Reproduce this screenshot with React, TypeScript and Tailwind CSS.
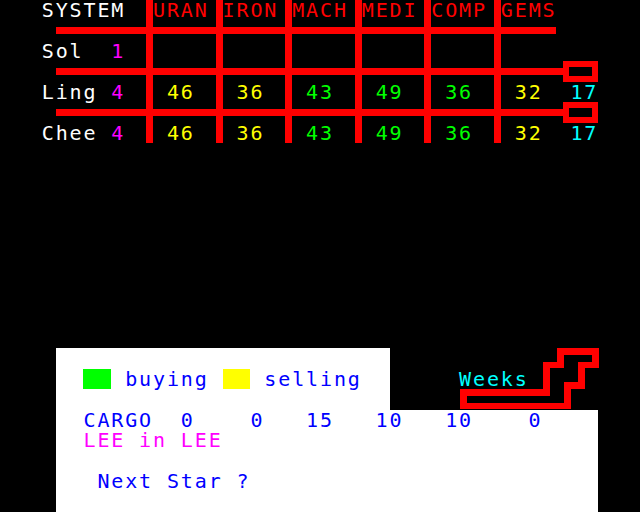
// Teletext (mode 7) trading screen: 46 x 25 cells of 13.913 x 20.48 px
const priceCells = [
  { col: "col-[5]", color: "text-[#ffff00]" },
  { col: "col-[7]", color: "text-[#ffff00]" },
  { col: "col-[9]", color: "text-[#00ff00]" },
  { col: "col-[11]", color: "text-[#00ff00]" },
  { col: "col-[13]", color: "text-[#00ff00]" },
  { col: "col-[15]", color: "text-[#ffff00]" },
];
const prices = ["46", "36", "43", "49", "36", "32"];

const headers = [
  { col: "col-[5]", name: "URAN" },
  { col: "col-[7]", name: "IRON" },
  { col: "col-[9]", name: "MACH" },
  { col: "col-[11]", name: "MEDI" },
  { col: "col-[13]", name: "COMP" },
  { col: "col-[15]", name: "GEMS" },
];

const verticals = ["col-[4]", "col-[6]", "col-[8]", "col-[10]", "col-[12]", "col-[14]"];

function PriceRow({ row, name, count }: { row: string; name: string; count: string }) {
  return (
    <>
      <div className={`${row} col-[2/4] whitespace-pre text-white`}>
        {name}
        <span className="text-[#ff00ff]">{count}</span>
      </div>
      {priceCells.map((c, i) => (
        <div key={c.col} className={`${row} ${c.col} whitespace-pre ${c.color}`}>
          {" " + prices[i]}
        </div>
      ))}
      <div className={`${row} col-[17/19] pl-[6.96px] whitespace-pre text-[#00ffff]`}>17</div>
    </>
  );
}

function Table() {
  return (
    <div className="grid h-[143.36px] grid-cols-[41.74px_13.91px_90.44px_6.96px_62.61px_6.96px_62.61px_6.96px_62.61px_6.96px_62.61px_6.96px_62.61px_6.96px_55.65px_6.96px_34.78px_1fr] grid-rows-[repeat(7,20.48px)]">
      {verticals.map((c) => (
        <div key={c} className={`${c} row-[1/8] bg-[#ff0000]`} />
      ))}
      <div className="col-[3/16] row-[2] h-[6.83px] self-center bg-[#ff0000]" />
      <div className="col-[3/17] row-[4] h-[6.83px] self-center bg-[#ff0000]" />
      <div className="col-[17] row-[4] border-x-[6.96px] border-y-[6.83px] border-[#ff0000]" />
      <div className="col-[3/17] row-[6] h-[6.83px] self-center bg-[#ff0000]" />
      <div className="col-[17] row-[6] border-x-[6.96px] border-y-[6.83px] border-[#ff0000]" />

      <div className="col-[2/4] row-[1] whitespace-pre text-white">SYSTEM</div>
      {headers.map((h) => (
        <div key={h.name} className={`${h.col} row-[1] whitespace-pre text-[#ff0000]`}>
          {h.name}
        </div>
      ))}
      <div className="col-[2/4] row-[3] whitespace-pre text-white">
        Sol  <span className="text-[#ff00ff]">1</span>
      </div>
      <PriceRow row="row-[5]" name="Ling " count="4" />
      <PriceRow row="row-[7]" name="Chee " count="4" />
    </div>
  );
}

// staircase mosaic, in sixel units (46 cols x 2 = 92 wide, 3 rows x 3 = 9 high)
const stairs = [
  [80, 0, 6, 1],
  [80, 0, 1, 3],
  [85, 0, 1, 3],
  [78, 2, 3, 1],
  [83, 2, 3, 1],
  [78, 2, 1, 5],
  [83, 2, 1, 4],
  [81, 5, 3, 1],
  [81, 5, 1, 4],
  [66, 6, 13, 1],
  [66, 8, 16, 1],
  [66, 6, 1, 3],
];

function Weeks() {
  return (
    <div className="relative flex-1 pt-[20.48px] pl-[69.57px]">
      <div className="whitespace-pre text-[#00ffff]">Weeks</div>
      <svg
        className="absolute inset-0 h-full w-full"
        viewBox="56 0 36 9"
        preserveAspectRatio="none"
        shapeRendering="crispEdges"
      >
        {stairs.map(([x, y, w, h], i) => (
          <rect key={i} x={x} y={y} width={w} height={h} fill="#ff0000" />
        ))}
      </svg>
    </div>
  );
}

export default function App() {
  return (
    <div className="flex h-[512px] w-[640px] flex-col overflow-hidden bg-black font-['DejaVu_Sans_Mono','Liberation_Mono',monospace] text-[20px] leading-[20.48px] tracking-[1.87px]">
      <Table />
      <div className="h-[204.8px]" />

      <div className="flex h-[61.44px]">
        <div className="w-[55.65px]" />
        <div className="w-[333.92px] bg-white pt-[20.48px] pl-[27.83px]">
          <div className="flex h-[20.48px] whitespace-pre text-[#0000ff]">
            <span className="h-[20.48px] w-[27.83px] bg-[#00ff00]" />
            <span> buying </span>
            <span className="h-[20.48px] w-[27.83px] bg-[#ffff00]" />
            <span> selling</span>
          </div>
        </div>
        <Weeks />
      </div>

      <div className="ml-[55.65px] h-[102.4px] w-[542.61px] bg-white pl-[27.83px] whitespace-pre">
        <div className="text-[#0000ff]">CARGO  0    0   15   10   10    0</div>
        <div className="text-[#ff00ff]">LEE in LEE</div>
        <div className="h-[20.48px]" />
        <div className="text-[#0000ff]"> Next Star ?</div>
      </div>
    </div>
  );
}
